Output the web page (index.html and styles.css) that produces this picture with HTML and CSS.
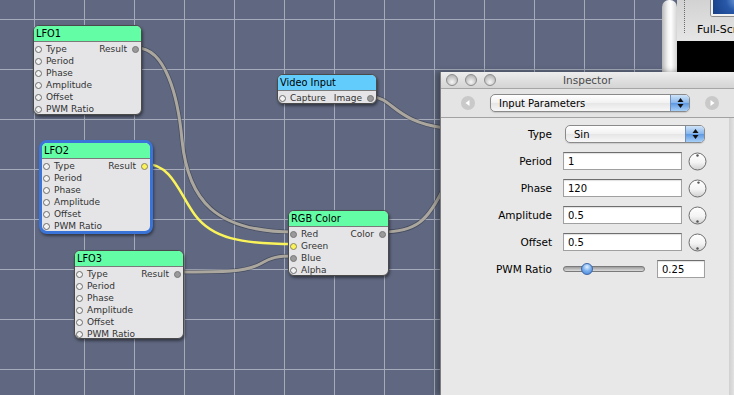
FILE: index.html
```html
<!DOCTYPE html>
<html lang="en">
<head>
    <meta charset="UTF-8">
    <title>Composition Editor</title>
    <link rel="stylesheet" href="styles.css">
</head>
<body>
    <div class="editor">
        <!-- Cables sit under the patches -->
        <svg class="cables" width="734" height="395" viewBox="0 0 734 395">
            <defs>
                <linearGradient id="knobFill" x1="0" y1="0" x2="0" y2="1">
                    <stop offset="0" stop-color="#ffffff"/>
                    <stop offset="0.55" stop-color="#f4f4f4"/>
                    <stop offset="1" stop-color="#cfcfcf"/>
                </linearGradient>
            </defs>
            <g class="cable-shade">
                <path d="M137,48 C165,48 178,95 182,140 C188,200 215,232 294,232"/>
                <path d="M178,272 C225,272 245,272 260,264 C272,257 278,256 294,256"/>
                <path d="M382,232 C415,232 428,222 445,185"/>
                <path d="M372,97 C392,97 395,122 445,128"/>
            </g>
            <g class="cable">
                <path d="M137,48 C165,48 178,95 182,140 C188,200 215,232 294,232"/>
                <path d="M178,272 C225,272 245,272 260,264 C272,257 278,256 294,256"/>
                <path d="M382,232 C415,232 428,222 445,185"/>
                <path d="M372,97 C392,97 395,122 445,128"/>
            </g>
            <path class="cable-hot" d="M146,164 C172,164 180,195 195,215 C212,238 240,244 294,244"/>
        </svg>

        <div class="node lfo1">
            <div class="node-title">LFO1</div>
            <div class="node-body">
                <ul class="ports">
                    <li><span class="port"></span>Type</li>
                    <li><span class="port"></span>Period</li>
                    <li><span class="port"></span>Phase</li>
                    <li><span class="port"></span>Amplitude</li>
                    <li><span class="port"></span>Offset</li>
                    <li><span class="port"></span>PWM Ratio</li>
                </ul>
                <ul class="ports outs">
                    <li>Result<span class="port on"></span></li>
                </ul>
            </div>
        </div>

        <div class="node lfo2 selected">
            <div class="node-title">LFO2</div>
            <div class="node-body">
                <ul class="ports">
                    <li><span class="port"></span>Type</li>
                    <li><span class="port"></span>Period</li>
                    <li><span class="port"></span>Phase</li>
                    <li><span class="port"></span>Amplitude</li>
                    <li><span class="port"></span>Offset</li>
                    <li><span class="port"></span>PWM Ratio</li>
                </ul>
                <ul class="ports outs">
                    <li>Result<span class="port hot"></span></li>
                </ul>
            </div>
        </div>

        <div class="node lfo3">
            <div class="node-title">LFO3</div>
            <div class="node-body">
                <ul class="ports">
                    <li><span class="port"></span>Type</li>
                    <li><span class="port"></span>Period</li>
                    <li><span class="port"></span>Phase</li>
                    <li><span class="port"></span>Amplitude</li>
                    <li><span class="port"></span>Offset</li>
                    <li><span class="port"></span>PWM Ratio</li>
                </ul>
                <ul class="ports outs">
                    <li>Result<span class="port on"></span></li>
                </ul>
            </div>
        </div>

        <div class="node video">
            <div class="node-title">Video Input</div>
            <div class="node-body">
                <ul class="ports">
                    <li><span class="port"></span>Capture</li>
                </ul>
                <ul class="ports outs">
                    <li>Image<span class="port on"></span></li>
                </ul>
            </div>
        </div>

        <div class="node rgb">
            <div class="node-title">RGB Color</div>
            <div class="node-body">
                <ul class="ports">
                    <li><span class="port on"></span>Red</li>
                    <li><span class="port hot"></span>Green</li>
                    <li><span class="port on"></span>Blue</li>
                    <li><span class="port"></span>Alpha</li>
                </ul>
                <ul class="ports outs">
                    <li>Color<span class="port on"></span></li>
                </ul>
            </div>
        </div>

        <!-- Viewer window peeking in at the top right -->
        <div class="viewer">
            <div class="scroller"></div>
            <div class="viewer-main">
                <div class="viewer-bar">
                    <div class="dots"></div>
                    <div class="tool">
                        <div class="thumb"></div>
                        <div class="tool-label">Full-Screen</div>
                    </div>
                </div>
                <div class="screen"></div>
            </div>
        </div>

        <!-- Inspector window -->
        <div class="inspector">
            <div class="titlebar">
                <div class="lights"><span></span><span></span><span></span></div>
                <div class="title">Inspector</div>
                <div></div>
            </div>
            <div class="toolbar">
                <svg class="nav" width="14" height="14" viewBox="0 0 14 14">
                    <circle cx="7" cy="7" r="7" fill="#c9c9c9"/>
                    <path d="M8.5,4 L4.5,7 L8.5,10 Z" fill="#fff"/>
                </svg>
                <div class="popup wide">
                    <span class="popup-text">Input Parameters</span>
                    <span class="stepper">
                        <svg width="7" height="12" viewBox="0 0 7 12"><path d="M3.5,1 L6.5,5 L0.5,5 Z M3.5,11 L6.5,7 L0.5,7 Z" fill="#111"/></svg>
                    </span>
                </div>
                <svg class="nav" width="14" height="14" viewBox="0 0 14 14">
                    <circle cx="7" cy="7" r="7" fill="#c9c9c9"/>
                    <path d="M5.5,4 L9.5,7 L5.5,10 Z" fill="#fff"/>
                </svg>
            </div>
            <div class="inspector-body">
                <div class="params">
                    <label>Type</label>
                    <div class="popup short">
                        <span class="popup-text">Sin</span>
                        <span class="stepper">
                            <svg width="7" height="12" viewBox="0 0 7 12"><path d="M3.5,1 L6.5,5 L0.5,5 Z M3.5,11 L6.5,7 L0.5,7 Z" fill="#111"/></svg>
                        </span>
                    </div>

                    <label>Period</label>
                    <div class="control">
                        <input class="field" type="text" value="1">
                        <svg class="knob" width="19" height="19" viewBox="0 0 19 19">
                            <circle cx="9.5" cy="9.5" r="8.5"/>
                            <circle class="knob-dot" cx="9.5" cy="3.5" r="1.2"/>
                        </svg>
                    </div>

                    <label>Phase</label>
                    <div class="control">
                        <input class="field" type="text" value="120">
                        <svg class="knob" width="19" height="19" viewBox="0 0 19 19">
                            <circle cx="9.5" cy="9.5" r="8.5"/>
                            <circle class="knob-dot" cx="10.5" cy="3.6" r="1.2"/>
                        </svg>
                    </div>

                    <label>Amplitude</label>
                    <div class="control">
                        <input class="field" type="text" value="0.5">
                        <svg class="knob" width="19" height="19" viewBox="0 0 19 19">
                            <circle cx="9.5" cy="9.5" r="8.5"/>
                            <circle class="knob-dot" cx="9.5" cy="15.5" r="1.2"/>
                        </svg>
                    </div>

                    <label>Offset</label>
                    <div class="control">
                        <input class="field" type="text" value="0.5">
                        <svg class="knob" width="19" height="19" viewBox="0 0 19 19">
                            <circle cx="9.5" cy="9.5" r="8.5"/>
                            <circle class="knob-dot" cx="9.5" cy="15.5" r="1.2"/>
                        </svg>
                    </div>

                    <label>PWM Ratio</label>
                    <div class="control">
                        <div class="slider">
                            <div class="track"></div>
                            <div class="thumb-knob"></div>
                        </div>
                        <input class="field small" type="text" value="0.25">
                    </div>
                </div>
                <div class="edge"></div>
            </div>
        </div>
    </div>
</body>
</html>
```

FILE: styles.css
```css
body {
    margin: 0;
    font-family: "DejaVu Sans", "Liberation Sans", sans-serif;
}

.editor {
    position: relative;
    width: 734px;
    height: 395px;
    overflow: hidden;
    background-color: #5f6880;
    background-image:
        linear-gradient(to right, #a6abbb 1px, transparent 1px),
        linear-gradient(to bottom, #a6abbb 1px, transparent 1px);
    background-size: 50px 50px;
    background-position: 34px 19px;
}

.cables {
    position: absolute;
    left: 0;
    top: 0;
}

.cables path {
    fill: none;
}

.cable-shade path {
    stroke: rgba(40, 44, 56, 0.45);
    stroke-width: 4.5;
}

.cable path {
    stroke: #aba79f;
    stroke-width: 3;
}

.cable-hot {
    stroke: #fbf35a;
    stroke-width: 2.5;
}

/* Patches */
.node {
    position: absolute;
    box-sizing: border-box;
    background: #e5e5e7;
    border: 1px solid #4a4a4a;
    border-radius: 6px;
    overflow: hidden;
    box-shadow: 1px 2px 3px rgba(0, 0, 0, 0.45);
}

.node.selected {
    border: 3px solid #3b74d9;
    border-radius: 8px;
}

.lfo1 { left: 33px; top: 25px; width: 109px; height: 90px; }
.lfo2 { left: 39px; top: 140px; width: 114px; height: 94px; }
.lfo3 { left: 74px; top: 250px; width: 110px; height: 89px; }
.video { left: 277px; top: 74px; width: 100px; height: 30px; }
.rgb { left: 288px; top: 210px; width: 101px; height: 66px; }

.node-title {
    height: 15px;
    line-height: 15px;
    padding-left: 2px;
    background: #63fda6;
    border-bottom: 1px solid #7a7a7a;
    font-size: 9.8px;
    color: #000;
}

.video .node-title {
    background: #62cdfd;
}

.node-body {
    display: flex;
    justify-content: space-between;
    padding: 1px 2px 1px 1px;
}

.ports {
    list-style: none;
    margin: 0;
    padding: 0;
}

.ports li {
    display: flex;
    align-items: center;
    height: 12px;
    font-size: 9px;
    color: #333;
    white-space: nowrap;
}

.port {
    width: 5px;
    height: 5px;
    border: 1px solid #6c6c6c;
    border-radius: 50%;
    background: #f2f2f2;
    margin-right: 4px;
}

.outs .port {
    margin-right: 0;
    margin-left: 5px;
}

.port.on {
    background: #9a9a9a;
    border-color: #777;
}

.port.hot {
    background: #fbf35a;
    border-color: #8a8660;
}

/* Viewer window */
.viewer {
    position: absolute;
    left: 662px;
    top: 0;
    width: 72px;
    height: 72px;
    display: flex;
}

.scroller {
    width: 15px;
    background: linear-gradient(to right, #b8b8b8, #f4f4f4 40%, #ffffff 60%, #d4d4d4);
    border-radius: 7px 7px 0 0;
}

.viewer-main {
    flex: 1;
    display: flex;
    flex-direction: column;
    overflow: hidden;
}

.viewer-bar {
    height: 41px;
    display: flex;
    background: linear-gradient(to bottom, #d2d2d2, #e6e6e6);
}

.dots {
    margin-left: 7px;
    height: 33px;
    border-left: 1px dotted #6a6a6a;
}

.tool {
    margin-left: 12px;
}

.thumb {
    margin-left: 14px;
    width: 30px;
    height: 14px;
    border: 2px solid #f2f2f2;
    border-top: none;
    box-shadow: 0 0 0 1px #8c8c8c;
    border-radius: 0 0 2px 2px;
    background: radial-gradient(circle at 80% 0%, #6f9ad8, #2858a8 40%, #173f86);
}

.tool-label {
    margin-top: 7px;
    font-size: 11px;
    color: #000;
    white-space: nowrap;
}

.screen {
    flex: 1;
    background: #000;
}

/* Inspector window */
.inspector {
    position: absolute;
    left: 440px;
    top: 72px;
    width: 294px;
    height: 323px;
    box-sizing: border-box;
    border-left: 1px solid #7d7d7d;
    background: #e8e8e8;
    box-shadow: -3px 0 6px rgba(0, 0, 0, 0.35);
    display: flex;
    flex-direction: column;
}

.titlebar {
    height: 16px;
    display: grid;
    grid-template-columns: 1fr auto 1fr;
    align-items: center;
    background: linear-gradient(to bottom, #ededed, #d4d4d4);
    border-bottom: 1px solid #a6a6a6;
}

.lights {
    display: flex;
    gap: 7px;
    padding-left: 5px;
}

.lights span {
    width: 10px;
    height: 10px;
    border-radius: 50%;
    border: 1px solid #8c8c8c;
    background: radial-gradient(circle at 50% 70%, #f6f6f6, #c4c4c4 60%, #a8a8a8);
}

.title {
    font-size: 10.5px;
    color: #4a4a4a;
}

.toolbar {
    height: 28px;
    display: flex;
    align-items: center;
    gap: 15px;
    padding-left: 20px;
    background: #e4e4e4;
    border-bottom: 1px solid #a2a2a2;
}

.popup {
    box-sizing: border-box;
    height: 18px;
    display: flex;
    align-items: center;
    border: 1px solid #8a8a8a;
    border-radius: 5px;
    overflow: hidden;
    background: linear-gradient(to bottom, #ffffff, #f1f1f1 50%, #e6e6e6 51%, #f7f7f7);
    box-shadow: 0 1px 1px rgba(0, 0, 0, 0.12);
}

.popup.wide {
    width: 200px;
}

.popup.short {
    width: 140px;
    margin-left: 2px;
}

.popup-text {
    flex: 1;
    padding-left: 8px;
    font-size: 10px;
    color: #000;
}

.stepper {
    width: 18px;
    height: 100%;
    display: flex;
    align-items: center;
    justify-content: center;
    border-left: 1px solid #6f8fbf;
    background: linear-gradient(to bottom, #cfe3f8, #86b6ec 50%, #5d98e2 51%, #a8d0f7);
}

.inspector-body {
    flex: 1;
    display: flex;
}

.params {
    flex: 1;
    align-self: flex-start;
    display: grid;
    grid-template-columns: 111px 1fr;
    grid-auto-rows: 18px;
    column-gap: 11px;
    row-gap: 9px;
    align-items: center;
    padding-top: 7px;
}

.params label {
    text-align: right;
    font-size: 10.5px;
    color: #000;
}

.control {
    display: flex;
    align-items: center;
    gap: 6px;
}

.field {
    box-sizing: border-box;
    width: 119px;
    height: 18px;
    margin: 0;
    padding: 0 4px;
    border: 1px solid #a0a0a0;
    border-top-color: #6e6e6e;
    background: #fff;
    box-shadow: inset 0 1px 1px rgba(0, 0, 0, 0.12);
    font-family: "DejaVu Sans", "Liberation Sans", sans-serif;
    font-size: 10px;
    color: #000;
}

.field.small {
    width: 48px;
    margin-left: 6px;
}

.knob circle {
    fill: url(#knobFill);
    stroke: #6e6e6e;
    stroke-width: 1;
}

.knob .knob-dot {
    fill: #555;
    stroke: none;
}

.slider {
    position: relative;
    width: 82px;
    height: 14px;
    display: flex;
    align-items: center;
}

.track {
    width: 100%;
    height: 4px;
    border: 1px solid #7a7a7a;
    border-radius: 3px;
    background: linear-gradient(to bottom, #9c9c9c, #dcdcdc);
}

.thumb-knob {
    position: absolute;
    left: 18px;
    top: 1px;
    width: 12px;
    height: 12px;
    box-sizing: border-box;
    border-radius: 50%;
    border: 1px solid #3d66a8;
    background: radial-gradient(circle at 50% 30%, #e4f0fd, #7fb2ee 45%, #3c7fd8);
}

.edge {
    width: 5px;
    background: linear-gradient(to right, #d0d0d0, #e2e2e2);
}
```
